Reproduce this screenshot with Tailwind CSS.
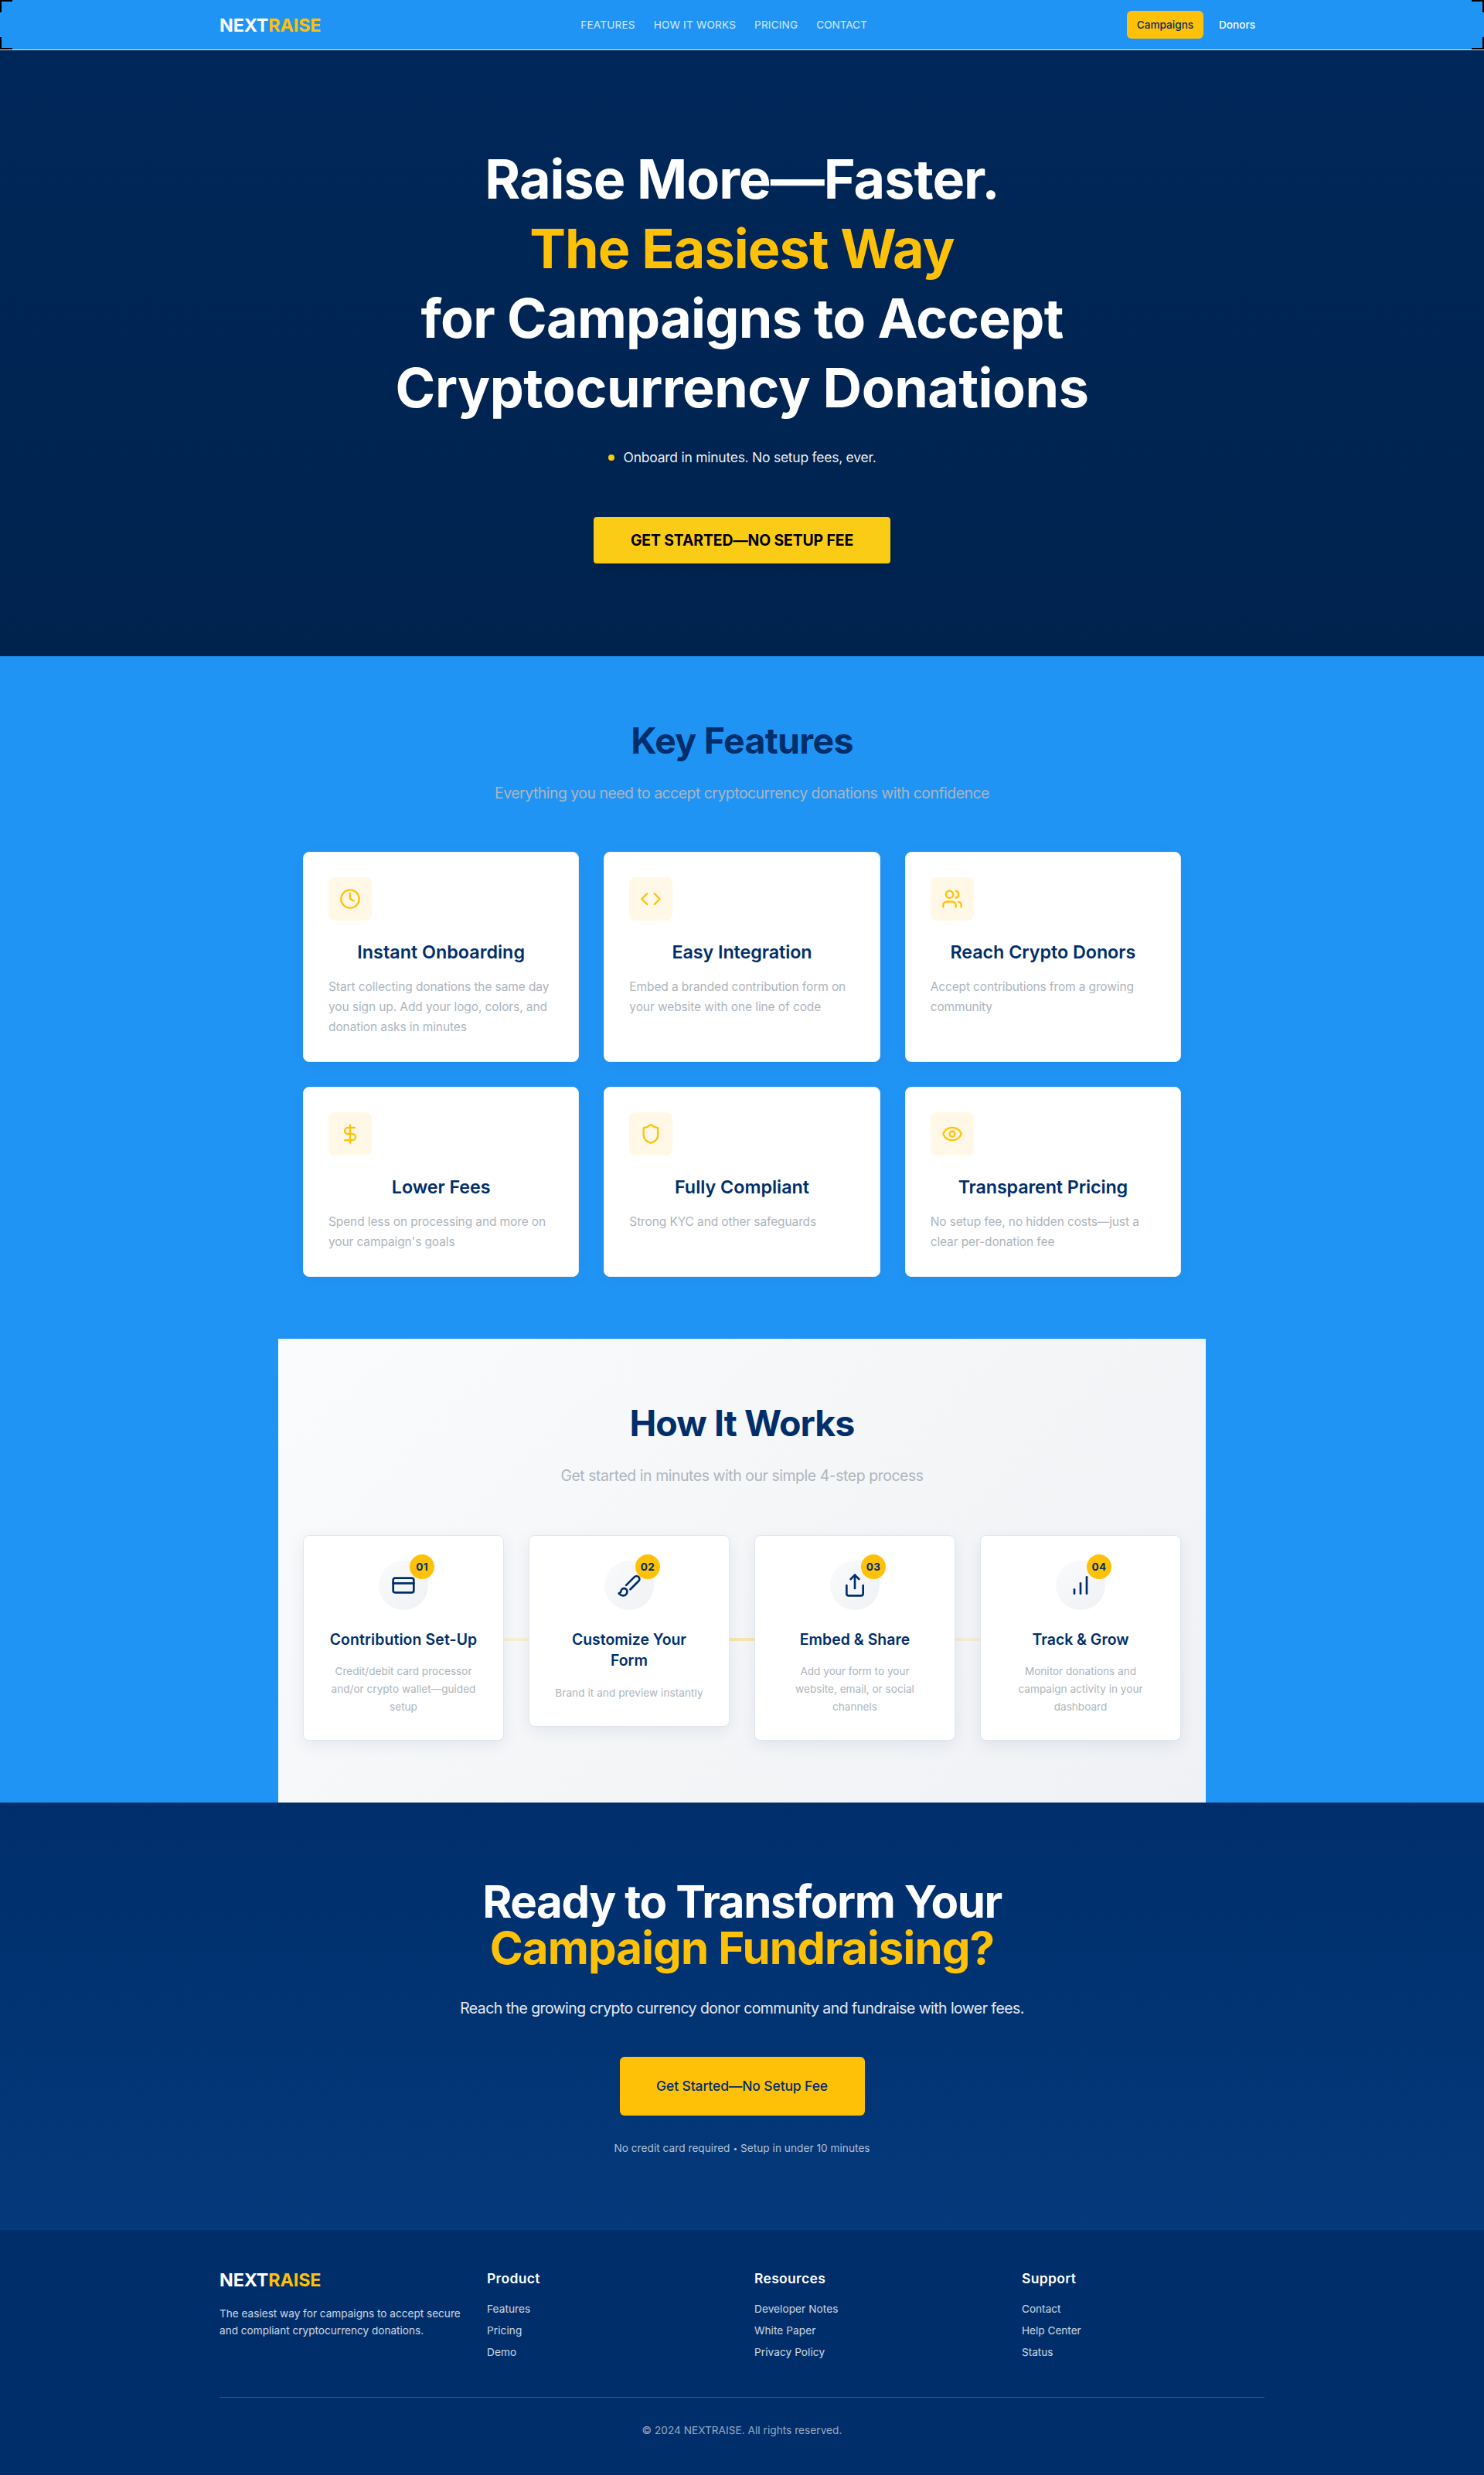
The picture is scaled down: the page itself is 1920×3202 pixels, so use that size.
<!DOCTYPE html>
<html lang="en">
<head>
<meta charset="utf-8">
<title>NEXTRAISE</title>
<script src="https://cdn.jsdelivr.net/npm/@tailwindcss/browser@4"></script>
</head>
<body class="bg-[#2094f5] font-['Inter',sans-serif] antialiased">

<header class="relative h-[65px] border-b border-[#e9ecef] bg-[#2094f5]">
  <span class="absolute left-0 top-0 size-4 border-l-2 border-t-2 border-black"></span>
  <span class="absolute right-0 top-0 size-4 border-r-2 border-t-2 border-black"></span>
  <span class="absolute bottom-0 left-0 size-4 border-b-2 border-l-2 border-black"></span>
  <span class="absolute bottom-0 right-0 size-4 border-b-2 border-r-2 border-black"></span>
  <div class="mx-auto flex h-16 w-[1352px] items-center justify-between">
    <div class="w-[131px] pt-px text-[23.3px] font-bold leading-8 tracking-[-0.005em] text-white whitespace-nowrap">NEXT<span class="text-[#ffc107]">RAISE</span></div>
    <nav class="flex gap-6 text-[13.6px] leading-5 tracking-[0.013em] text-white/80">
      <a>FEATURES</a><a>HOW IT WORKS</a><a>PRICING</a><a class="tracking-[-0.005em]">CONTACT</a>
    </nav>
    <div class="flex gap-2 text-[13.6px] font-medium leading-5">
      <a class="flex h-9 w-[99px] items-center justify-center rounded-md bg-[#ffc107] text-[#002e6b]">Campaigns</a>
      <a class="flex h-9 w-[71px] items-center justify-center rounded-md text-white">Donors</a>
    </div>
  </div>
</header>

<section class="flex h-[784px] flex-col items-center bg-linear-to-b from-[#002759] to-[#00234e] pt-[122px]">
  <h1 class="text-center text-[70px] font-bold leading-[90px] text-white">
    <span class="block tracking-[-0.0143em]">Raise More—Faster.</span>
    <span class="block tracking-[-0.0131em] text-[#ffc107]">The Easiest Way</span>
    <span class="block tracking-[-0.0102em]">for Campaigns to Accept</span>
    <span class="block tracking-[-0.0067em]">Cryptocurrency Donations</span>
  </h1>
  <div class="mt-[31px] flex h-7 items-center gap-3">
    <span class="size-2 rounded-full bg-[#facc15]"></span>
    <p class="text-[17.5px] leading-7 tracking-[-0.0145em] text-white/95">Onboard in minutes. No setup fees, ever.</p>
  </div>
  <a class="mt-[63px] flex h-15 w-96 items-center justify-center rounded bg-[#facc15] pt-0.5 text-[19.4px] font-bold tracking-[-0.0064em] text-black shadow-lg">GET STARTED—NO SETUP FEE</a>
</section>

<section class="mx-auto w-[1200px] px-8 pb-20 pt-[81px]">
  <h2 class="text-center text-[46.5px] font-bold leading-[57.6px] tracking-[-0.0155em] text-[#002e6b]">Key Features</h2>
  <p class="mt-6 text-center text-[19.4px] leading-7 tracking-[-0.0252em] text-[#adb5bd]">Everything you need to accept cryptocurrency donations with confidence</p>
  <div class="mt-[62.6px] grid grid-cols-3 gap-8">
    <div class="rounded-lg border border-[#e9ecef] bg-white px-8 pb-[31px] pt-8 shadow-[0_4px_16px_rgba(0,46,107,0.06)]">
      <div class="flex size-14 items-center justify-center rounded-lg bg-[#fff8e6]">
        <svg class="size-7 text-[#ffc107]" viewBox="0 0 24 24" fill="none" stroke="currentColor" stroke-width="2" stroke-linecap="round" stroke-linejoin="round"><circle cx="12" cy="12" r="10"/><path d="M12 6v6l4 2"/></svg>
      </div>
      <h3 class="mt-[23px] text-center text-[23.3px] font-semibold leading-9 tracking-[0.001em] text-[#002e6b]">Instant Onboarding</h3>
      <p class="mt-3.5 text-[15.5px] leading-[26px] tracking-[-0.0066em] text-[#adb5bd]">Start collecting donations the same day<br>you sign up. Add your logo, colors, and<br>donation asks in minutes</p>
    </div>
    <div class="rounded-lg border border-[#e9ecef] bg-white px-8 pb-[31px] pt-8 shadow-[0_4px_16px_rgba(0,46,107,0.06)]">
      <div class="flex size-14 items-center justify-center rounded-lg bg-[#fff8e6]">
        <svg class="size-7 text-[#ffc107]" viewBox="0 0 24 24" fill="none" stroke="currentColor" stroke-width="2" stroke-linecap="round" stroke-linejoin="round"><path d="m16 18 6-6-6-6"/><path d="m8 6-6 6 6 6"/></svg>
      </div>
      <h3 class="mt-[23px] text-center text-[23.3px] font-semibold leading-9 tracking-[-0.003em] text-[#002e6b]">Easy Integration</h3>
      <p class="mt-3.5 text-[15.5px] leading-[26px] tracking-[-0.0065em] text-[#adb5bd]">Embed a branded contribution form on<br>your website with one line of code</p>
    </div>
    <div class="rounded-lg border border-[#e9ecef] bg-white px-8 pb-[31px] pt-8 shadow-[0_4px_16px_rgba(0,46,107,0.06)]">
      <div class="flex size-14 items-center justify-center rounded-lg bg-[#fff8e6]">
        <svg class="size-7 text-[#ffc107]" viewBox="0 0 24 24" fill="none" stroke="currentColor" stroke-width="2" stroke-linecap="round" stroke-linejoin="round"><path d="M16 21v-2a4 4 0 0 0-4-4H6a4 4 0 0 0-4 4v2"/><circle cx="9" cy="7" r="4"/><path d="M22 21v-2a4 4 0 0 0-3-3.87"/><path d="M16 3.13a4 4 0 0 1 0 7.75"/></svg>
      </div>
      <h3 class="mt-[23px] text-center text-[23.3px] font-semibold leading-9 tracking-[-0.0018em] text-[#002e6b]">Reach Crypto Donors</h3>
      <p class="mt-3.5 text-[15.5px] leading-[26px] tracking-[-0.0087em] text-[#adb5bd]">Accept contributions from a growing<br>community</p>
    </div>
    <div class="rounded-lg border border-[#e9ecef] bg-white px-8 pb-[31px] pt-8 shadow-[0_4px_16px_rgba(0,46,107,0.06)]">
      <div class="flex size-14 items-center justify-center rounded-lg bg-[#fff8e6]">
        <svg class="size-7 text-[#ffc107]" viewBox="0 0 24 24" fill="none" stroke="currentColor" stroke-width="2" stroke-linecap="round" stroke-linejoin="round"><path d="M12 2v20"/><path d="M17 5H9.5a3.5 3.5 0 0 0 0 7h5a3.5 3.5 0 0 1 0 7H6"/></svg>
      </div>
      <h3 class="mt-[23px] text-center text-[23.3px] font-semibold leading-9 tracking-[-0.003em] text-[#002e6b]">Lower Fees</h3>
      <p class="mt-3.5 text-[15.5px] leading-[26px] tracking-[-0.0075em] text-[#adb5bd]">Spend less on processing and more on<br>your campaign's goals</p>
    </div>
    <div class="rounded-lg border border-[#e9ecef] bg-white px-8 pb-[31px] pt-8 shadow-[0_4px_16px_rgba(0,46,107,0.06)]">
      <div class="flex size-14 items-center justify-center rounded-lg bg-[#fff8e6]">
        <svg class="size-7 text-[#ffc107]" viewBox="0 0 24 24" fill="none" stroke="currentColor" stroke-width="2" stroke-linecap="round" stroke-linejoin="round"><path d="M20 13c0 5-3.5 7.5-7.66 8.95a1 1 0 0 1-.67-.01C7.5 20.5 4 18 4 13V6a1 1 0 0 1 1-1c2 0 4.5-1.2 6.24-2.72a1.17 1.17 0 0 1 1.52 0C14.51 3.81 17 5 19 5a1 1 0 0 1 1 1z"/></svg>
      </div>
      <h3 class="mt-[23px] text-center text-[23.3px] font-semibold leading-9 text-[#002e6b]">Fully Compliant</h3>
      <p class="mt-3.5 text-[15.5px] leading-[26px] tracking-[-0.0075em] text-[#adb5bd]">Strong KYC and other safeguards</p>
    </div>
    <div class="rounded-lg border border-[#e9ecef] bg-white px-8 pb-[31px] pt-8 shadow-[0_4px_16px_rgba(0,46,107,0.06)]">
      <div class="flex size-14 items-center justify-center rounded-lg bg-[#fff8e6]">
        <svg class="size-7 text-[#ffc107]" viewBox="0 0 24 24" fill="none" stroke="currentColor" stroke-width="2" stroke-linecap="round" stroke-linejoin="round"><path d="M2.062 12.348a1 1 0 0 1 0-.696 10.75 10.75 0 0 1 19.876 0 1 1 0 0 1 0 .696 10.75 10.75 0 0 1-19.876 0"/><circle cx="12" cy="12" r="3"/></svg>
      </div>
      <h3 class="mt-[23px] text-center text-[23.3px] font-semibold leading-9 tracking-[-0.0052em] text-[#002e6b]">Transparent Pricing</h3>
      <p class="mt-3.5 text-[15.5px] leading-[26px] tracking-[-0.0075em] text-[#adb5bd]">No setup fee, no hidden costs—just a<br>clear per-donation fee</p>
    </div>
  </div>
</section>

<section class="mx-auto w-[1200px] bg-linear-135 from-[#fafbfc] to-[#eff1f4] px-8 pb-20 pt-[81px]">
  <h2 class="text-center text-[46.5px] font-bold leading-[57.6px] tracking-[-0.0201em] text-[#002e6b]">How It Works</h2>
  <p class="mt-6 text-center text-[19.4px] leading-7 tracking-[-0.0218em] text-[#adb5bd]">Get started in minutes with our simple 4-step process</p>
  <div class="relative mt-[63px]">
    <div class="absolute inset-x-0 top-1/2 h-1 bg-linear-to-r from-[#ffc107]/0 via-[#ffc107] to-[#ffc107]/0 opacity-30"></div>
    <div class="relative grid grid-cols-4 items-start gap-8">
      <div class="flex flex-col items-center rounded-lg border border-[#e1e6ec] bg-white px-6 pb-[31px] pt-8 text-center shadow-[0_6px_20px_rgba(0,46,107,0.08)]">
        <div class="relative flex size-16 items-center justify-center rounded-full bg-linear-135 from-[#fafbfc] to-[#eff1f4] text-[#002e6b]">
          <svg class="size-8" viewBox="0 0 24 24" fill="none" stroke="currentColor" stroke-width="2" stroke-linecap="round" stroke-linejoin="round"><rect x="2" y="5" width="20" height="14" rx="2"/><path d="M2 10h20"/></svg>
          <span class="absolute -right-2 -top-2 flex size-8 items-center justify-center rounded-full bg-[#ffc107] text-[13.6px] font-bold tracking-[0.02em]">01</span>
        </div>
        <h3 class="mt-[25px] text-[19.4px] font-semibold leading-[27.5px] tracking-[0.0069em] text-[#002e6b] whitespace-nowrap">Contribution Set-Up</h3>
        <p class="mt-4 text-[13.6px] leading-[22.75px] text-[#adb5bd]">Credit/debit card processor<br>and/or crypto wallet—guided<br>setup</p>
      </div>
      <div class="flex flex-col items-center rounded-lg border border-[#e1e6ec] bg-white px-6 pb-[31px] pt-8 text-center shadow-[0_6px_20px_rgba(0,46,107,0.08)]">
        <div class="relative flex size-16 items-center justify-center rounded-full bg-linear-135 from-[#fafbfc] to-[#eff1f4] text-[#002e6b]">
          <svg class="size-8" viewBox="0 0 24 24" fill="none" stroke="currentColor" stroke-width="2" stroke-linecap="round" stroke-linejoin="round"><path d="m9.06 11.9 8.07-8.06a2.85 2.85 0 1 1 4.03 4.03l-8.06 8.08"/><path d="M7.07 14.94c-1.66 0-3 1.35-3 3.02 0 1.33-2.5 1.52-2 2.02 1.08 1.1 2.49 2.02 4 2.02 2.2 0 4-1.8 4-4.04a3.01 3.01 0 0 0-3-3.02z"/></svg>
          <span class="absolute -right-2 -top-2 flex size-8 items-center justify-center rounded-full bg-[#ffc107] text-[13.6px] font-bold tracking-[0.02em]">02</span>
        </div>
        <h3 class="mt-[25px] text-[19.4px] font-semibold leading-[27.5px] text-[#002e6b]">Customize Your<br>Form</h3>
        <p class="mt-4 text-[13.6px] leading-[22.75px] tracking-[0.004em] text-[#adb5bd]">Brand it and preview instantly</p>
      </div>
      <div class="flex flex-col items-center rounded-lg border border-[#e1e6ec] bg-white px-6 pb-[31px] pt-8 text-center shadow-[0_6px_20px_rgba(0,46,107,0.08)]">
        <div class="relative flex size-16 items-center justify-center rounded-full bg-linear-135 from-[#fafbfc] to-[#eff1f4] text-[#002e6b]">
          <svg class="size-8" viewBox="0 0 24 24" fill="none" stroke="currentColor" stroke-width="2" stroke-linecap="round" stroke-linejoin="round"><path d="M4 12v8a2 2 0 0 0 2 2h12a2 2 0 0 0 2-2v-8"/><path d="m16 6-4-4-4 4"/><path d="M12 2v13"/></svg>
          <span class="absolute -right-2 -top-2 flex size-8 items-center justify-center rounded-full bg-[#ffc107] text-[13.6px] font-bold tracking-[0.02em]">03</span>
        </div>
        <h3 class="mt-[25px] text-[19.4px] font-semibold leading-[27.5px] tracking-[0.003em] text-[#002e6b]">Embed &amp; Share</h3>
        <p class="mt-4 text-[13.6px] leading-[22.75px] text-[#adb5bd]">Add your form to your<br>website, email, or social<br>channels</p>
      </div>
      <div class="flex flex-col items-center rounded-lg border border-[#e1e6ec] bg-white px-6 pb-[31px] pt-8 text-center shadow-[0_6px_20px_rgba(0,46,107,0.08)]">
        <div class="relative flex size-16 items-center justify-center rounded-full bg-linear-135 from-[#fafbfc] to-[#eff1f4] text-[#002e6b]">
          <svg class="size-8" viewBox="0 0 24 24" fill="none" stroke="currentColor" stroke-width="2" stroke-linecap="round" stroke-linejoin="round"><path d="M12 20V10"/><path d="M18 20V4"/><path d="M6 20v-4"/></svg>
          <span class="absolute -right-2 -top-2 flex size-8 items-center justify-center rounded-full bg-[#ffc107] text-[13.6px] font-bold tracking-[0.02em]">04</span>
        </div>
        <h3 class="mt-[25px] text-[19.4px] font-semibold leading-[27.5px] text-[#002e6b]">Track &amp; Grow</h3>
        <p class="mt-4 text-[13.6px] leading-[22.75px] text-[#adb5bd]">Monitor donations and<br>campaign activity in your<br>dashboard</p>
      </div>
    </div>
  </div>
</section>

<section class="flex h-[553px] flex-col items-center bg-linear-to-b from-[#002e6b] to-[#04397b] pt-[98px] text-center">
  <h2 class="text-[58.2px] font-bold leading-[60px] text-white">
    <span class="block tracking-[-0.0243em]">Ready to Transform Your</span>
    <span class="block tracking-[-0.0152em] text-[#ffc107]">Campaign Fundraising?</span>
  </h2>
  <p class="mt-8 text-[19.4px] leading-[32.5px] tracking-[-0.0266em] text-white/90">Reach the growing crypto currency donor community and fundraise with lower fees.</p>
  <a class="mt-[46.5px] flex h-[76px] w-[317px] items-center justify-center rounded-md bg-[#ffc107] pt-0.5 text-[17.5px] font-medium tracking-[-0.0073em] text-[#002e6b]">Get Started—No Setup Fee</a>
  <p class="mt-8 text-[13.6px] leading-[21px] tracking-[0.004em] text-white/70">No credit card required <span class="align-[1px] text-[10px]">•</span> Setup in under 10 minutes</p>
</section>

<footer class="bg-[#002e6b] py-12">
  <div class="mx-auto w-[1352px]">
    <div class="grid grid-cols-4 gap-8 text-[13.6px] leading-5 text-white/80">
      <div class="pt-px">
        <div class="text-[23.3px] font-bold leading-8 tracking-[-0.005em] text-white">NEXT<span class="text-[#ffc107]">RAISE</span></div>
        <p class="mt-4 leading-[22.75px] whitespace-nowrap">The easiest way for campaigns to accept secure<br>and compliant cryptocurrency donations.</p>
      </div>
      <div class="pt-px">
        <h4 class="text-[17.5px] font-semibold leading-7 tracking-[0.018em] text-white">Product</h4>
        <ul class="mt-[15px] flex flex-col gap-2 tracking-[0.006em]"><li>Features</li><li>Pricing</li><li>Demo</li></ul>
      </div>
      <div class="pt-px">
        <h4 class="text-[17.5px] font-semibold leading-7 tracking-[0.018em] text-white">Resources</h4>
        <ul class="mt-[15px] flex flex-col gap-2 tracking-[0.006em]"><li>Developer Notes</li><li>White Paper</li><li>Privacy Policy</li></ul>
      </div>
      <div class="pt-px">
        <h4 class="text-[17.5px] font-semibold leading-7 tracking-[0.018em] text-white">Support</h4>
        <ul class="mt-[15px] flex flex-col gap-2"><li>Contact</li><li>Help Center</li><li>Status</li></ul>
      </div>
    </div>
    <div class="mt-12 border-t border-white/20 pt-8 text-center text-[13.6px] leading-5 tracking-[0.0035em] text-white/60">© 2024 NEXTRAISE. All rights reserved.</div>
  </div>
</footer>
</body>
</html>
